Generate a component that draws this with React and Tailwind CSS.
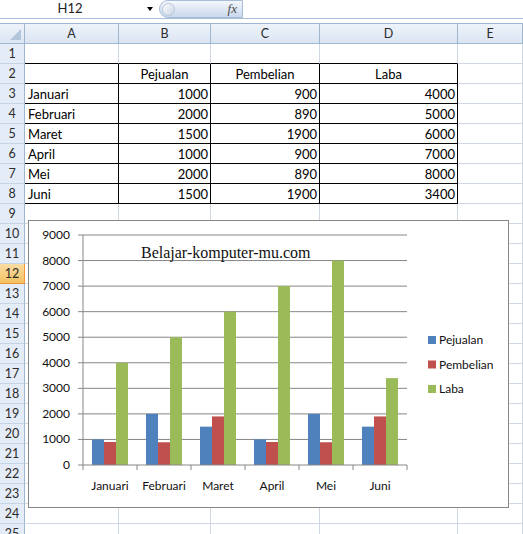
import React from "react";

const COLS = ["A", "B", "C", "D", "E"];

const tableRows = {
  2: ["", "Pejualan", "Pembelian", "Laba"],
  3: ["Januari", "1000", "900", "4000"],
  4: ["Februari", "2000", "890", "5000"],
  5: ["Maret", "1500", "1900", "6000"],
  6: ["April", "1000", "900", "7000"],
  7: ["Mei", "2000", "890", "8000"],
  8: ["Juni", "1500", "1900", "3400"],
};

const months = ["Januari", "Februari", "Maret", "April", "Mei", "Juni"];
const series = [
  { name: "Pejualan", color: "#4F81BD", values: [1000, 2000, 1500, 1000, 2000, 1500] },
  { name: "Pembelian", color: "#C0504D", values: [900, 890, 1900, 900, 890, 1900] },
  { name: "Laba", color: "#9BBB59", values: [4000, 5000, 6000, 7000, 8000, 3400] },
];

const FormulaBar = () => (
  <div className="h-[23px] bg-white relative">
    <div className="h-[19px] flex items-stretch border-b border-[#a7bcd6]">
      <div className="w-[140px] flex items-center justify-center text-[13px] text-[#222]">H12</div>
      <div className="w-[19px] flex items-center justify-center">
        <div className="w-0 h-0 border-l-[3.5px] border-r-[3.5px] border-t-[4px] border-l-transparent border-r-transparent border-t-black" />
      </div>
      <div className="w-[84px] rounded-l-full border border-[#a9bdd6] bg-gradient-to-b from-[#f4f7fc] to-[#c9d8ec] flex items-center justify-between pl-[2px] pr-[5px]">
        <div className="w-[13px] h-[13px] rounded-full bg-gradient-to-br from-[#ffffff] to-[#c7d3e3] border border-[#b7c6da]" />
        <span className="font-['Liberation_Serif',serif] italic text-[13px] text-[#4a4a4a]">fx</span>
      </div>
      <div className="flex-1" />
    </div>
  </div>
);

const Cell = ({ children, align = "left", table, topTable }) => {
  const border = table ? "border-r-black border-b-black" : topTable ? "border-r-[#d0d7e5] border-b-black" : "border-r-[#d0d7e5] border-b-[#d0d7e5]";
  const al = align === "right" ? "text-right pr-[2px]" : align === "center" ? "text-center" : "text-left pl-[3px]";
  return (
    <div className={`h-[20px] border-r border-b ${border} ${al} text-[13px] leading-[20px] text-black overflow-hidden whitespace-nowrap`}>
      {children}
    </div>
  );
};

const Sheet = () => {
  const rows = Array.from({ length: 25 }, (_, i) => i + 1);
  return (
    <div className="grid grid-cols-[25px_94px_92px_109px_138px_65px] border-t border-[#9eb6ce]">
      {/* header row */}
      <div className="h-[20px] bg-gradient-to-b from-[#eef3fa] to-[#dbe5f3] border-r border-b border-[#9eb6ce] relative">
        <div className="absolute right-[3px] bottom-[3px] w-0 h-0 border-l-[11px] border-t-[11px] border-l-transparent border-t-transparent border-b-0 border-r-0" style={{ borderBottom: "11px solid #b3c5dd" }} />
      </div>
      {COLS.map((c) => (
        <div key={c} className="h-[20px] bg-gradient-to-b from-[#eef3fa] to-[#dbe5f3] border-r border-b border-[#9eb6ce] text-center text-[12.5px] leading-[20px] text-[#2b2b2b]">
          {c}
        </div>
      ))}
      {rows.map((r) => (
        <React.Fragment key={r}>
          <div
            className={`h-[20px] border-r border-b text-center text-[12.5px] leading-[20px] text-[#2b2b2b] ${
              r === 12
                ? "bg-gradient-to-b from-[#fbdca3] to-[#f3c160] border-r-[#f29536] border-b-[#f29536]"
                : "bg-[#e4ecf7] border-r-[#9eb6ce] border-b-[#c5d4e7]"
            }`}
          >
            {r}
          </div>
          {COLS.map((c, ci) => {
            const data = tableRows[r];
            const inTable = data && ci < 4;
            const text = inTable ? data[ci] : "";
            let align = "left";
            if (inTable && r === 2) align = "center";
            else if (inTable && ci > 0) align = "right";
            return (
              <Cell key={c} align={align} table={inTable} topTable={r === 1 && ci < 4}>
                {text}
              </Cell>
            );
          })}
        </React.Fragment>
      ))}
    </div>
  );
};

const Chart = () => {
  const y0 = 244;
  const scale = 230 / 9000;
  const ticks = [0, 1000, 2000, 3000, 4000, 5000, 6000, 7000, 8000, 9000];
  const font = "Lato, sans-serif";
  return (
    <div className="absolute left-[28px] top-[220px] w-[481px] h-[288px] bg-white border border-[#868686]">
      <svg width="479" height="286" className="block">
        {ticks.map((t) => {
          const y = y0 - t * scale;
          return (
            <g key={t}>
              {t > 0 && <line x1="54" x2="378" y1={y} y2={y} stroke="#868686" strokeWidth="1" />}
              <line x1="49" x2="54" y1={y} y2={y} stroke="#868686" strokeWidth="1" />
              <text x="41" y={y + 4} textAnchor="end" fontFamily={font} fontSize="12" fill="#111">
                {t}
              </text>
            </g>
          );
        })}
        {months.map((m, i) => {
          const gx = 54 + 54 * i;
          return (
            <g key={m}>
              {series.map((s, si) => {
                const h = s.values[i] * scale;
                return <rect key={s.name} x={gx + 9 + si * 12} y={y0 - h} width="12" height={h} fill={s.color} />;
              })}
              <text x={gx + 27} y="269" textAnchor="middle" fontFamily={font} fontSize="12" fill="#111">
                {m}
              </text>
            </g>
          );
        })}
        <line x1="54" x2="54" y1="14" y2={y0} stroke="#868686" strokeWidth="1" />
        <line x1="54" x2="378" y1={y0} y2={y0} stroke="#868686" strokeWidth="1" />
        {[0, 1, 2, 3, 4, 5, 6].map((i) => (
          <line key={i} x1={54 + 54 * i} x2={54 + 54 * i} y1={y0} y2={y0 + 5} stroke="#868686" strokeWidth="1" />
        ))}
        <text x="112" y="37" fontFamily="'Liberation Serif', serif" fontSize="16" fill="#111">
          Belajar-komputer-mu.com
        </text>
        {series.map((s, i) => {
          const cy = 119 + i * 24.5;
          return (
            <g key={s.name}>
              <rect x="399" y={cy - 4} width="8" height="8" fill={s.color} />
              <text x="410" y={cy + 4} fontFamily={font} fontSize="12" fill="#111">
                {s.name}
              </text>
            </g>
          );
        })}
      </svg>
    </div>
  );
};

export default function App() {
  return (
    <div className="relative w-[523px] h-[534px] overflow-hidden bg-white font-['Lato',sans-serif]">
      <FormulaBar />
      <Sheet />
      <Chart />
    </div>
  );
}
